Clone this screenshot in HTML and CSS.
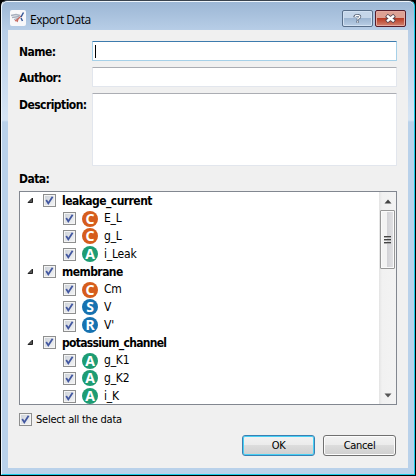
FILE: index.html
```html
<!DOCTYPE html>
<html lang="en">
<head>
<meta charset="utf-8">
<title>Export Data</title>
<link rel="stylesheet" href="styles.css">
</head>
<body>
<svg width="0" height="0" class="defs">
  <defs>
    <symbol id="tick" viewBox="0 0 13 13"><path d="M3.2 6 5.3 9.4 9.6 2.8" fill="none" stroke="#4257a0" stroke-width="1.8"/></symbol>
    <symbol id="expanded" viewBox="0 0 7 7"><path d="M5.5 1V5.5H1Z" fill="#555" stroke="#222"/></symbol>
  </defs>
</svg>
<div class="window">
  <header class="titlebar">
    <svg class="app" viewBox="0 0 16 16"><rect width="16" height="16" rx="2" fill="#f8f8fa"/><path d="M1 5.5 6 4.5 10 5.5M2 7.5 9 6.5M4 9.5 9 8" stroke="#a7afbd" stroke-width="1.3" fill="none"/><path d="M7 12 8 9 11 6M5 11 8 9" stroke="#c76a62" stroke-width="1.3" fill="none"/><path d="M11 7 13.5 2.5M11 8 12.5 11" stroke="#355797" stroke-width="1.5"/></svg>
    <h1>Export Data</h1>
    <button class="caption help" aria-label="Help"><svg viewBox="0 0 12 12"><path d="M2.2 4.2V3.2Q2.8 1.7 6 1.7T9.4 3.7Q9.4 5 7.4 5.8Q6.2 6.2 6.2 7.6M6.2 8.8V11.8" fill="none" stroke="#505c70" stroke-width="3.2"/><path d="M2.9 3.9V3.2Q3.4 1.8 6 1.8T9.2 3.7Q9.2 4.8 7.3 5.6Q6.2 6.1 6.2 7.2M6.2 9.5V11.2" fill="none" stroke="#fff" stroke-width="1.7"/></svg></button>
    <button class="caption close" aria-label="Close"><svg viewBox="0 0 12 12"><path d="M1.5 2.5 10.5 9.5M10.5 2.5 1.5 9.5" stroke="#54444e" stroke-width="4.6"/><path d="M2.2 3 9.8 9M9.8 3 2.2 9" stroke="#fff" stroke-width="2.6"/></svg></button>
  </header>
  <main>
    <div class="form">
      <label>Name:</label><div class="field focus"><i class="caret"></i></div>
      <label>Author:</label><div class="field"></div>
      <label class="top">Description:</label><div class="field area"></div>
    </div>
    <div class="datalabel">Data:</div>
    <div class="tree">
      <div class="rows">
        <div class="row group"><svg class="arrow"><use href="#expanded"/></svg><span class="check"><svg><use href="#tick"/></svg></span><b>leakage_current</b></div>
        <div class="row"><span class="check"><svg><use href="#tick"/></svg></span><span class="badge orange">C</span><span>E_L</span></div>
        <div class="row"><span class="check"><svg><use href="#tick"/></svg></span><span class="badge orange">C</span><span>g_L</span></div>
        <div class="row"><span class="check"><svg><use href="#tick"/></svg></span><span class="badge green">A</span><span>i_Leak</span></div>
        <div class="row group"><svg class="arrow"><use href="#expanded"/></svg><span class="check"><svg><use href="#tick"/></svg></span><b>membrane</b></div>
        <div class="row"><span class="check"><svg><use href="#tick"/></svg></span><span class="badge orange">C</span><span>Cm</span></div>
        <div class="row"><span class="check"><svg><use href="#tick"/></svg></span><span class="badge blue">S</span><span>V</span></div>
        <div class="row"><span class="check"><svg><use href="#tick"/></svg></span><span class="badge blue">R</span><span>V'</span></div>
        <div class="row group"><svg class="arrow"><use href="#expanded"/></svg><span class="check"><svg><use href="#tick"/></svg></span><b class="tight">potassium_channel</b></div>
        <div class="row"><span class="check"><svg><use href="#tick"/></svg></span><span class="badge green">A</span><span>g_K1</span></div>
        <div class="row"><span class="check"><svg><use href="#tick"/></svg></span><span class="badge green">A</span><span>g_K2</span></div>
        <div class="row"><span class="check"><svg><use href="#tick"/></svg></span><span class="badge green">A</span><span>i_K</span></div>
      </div>
      <div class="scrollbar">
        <svg class="up" viewBox="0 0 8 5"><path d="M0.5 4.5 4 0.5 7.5 4.5Z" fill="#444"/></svg>
        <div class="thumb"><i></i><i></i><i></i></div>
        <svg class="down" viewBox="0 0 8 5"><path d="M0.5 0.5H7.5L4 4.5Z" fill="#555"/></svg>
      </div>
    </div>
    <div class="all"><span class="check"><svg><use href="#tick"/></svg></span><span>Select all the data</span></div>
    <footer><button class="btn default">OK</button><button class="btn">Cancel</button></footer>
  </main>
</div>
</body>
</html>
```
FILE: styles.css
```css
* { box-sizing: border-box; }
body { margin: 0; background: #000; font: 12px/17px "DejaVu Sans Condensed", "DejaVu Sans", sans-serif; font-stretch: condensed; color: #000; overflow: hidden; }
.defs { display: block; height: 0; }
svg { display: block; flex: none; }
.window { width: 414px; height: 475px; margin-left: 1px; padding: 0 6px 6px; border: 1px solid #18c9e6; border-left-color: #edf5fc; border-top: 1px solid #39434e; border-radius: 6px 6px 0 0; box-shadow: inset 0 1px #eef5fb; background: linear-gradient(#9bb6d4 0, #b8cee7 30px, #d5e4f4 115px, #d5e4f4 119px, #b9d1ea 121px); }
.titlebar { height: 29px; display: flex; align-items: flex-start; padding: 9px 2px 0; }
.app { width: 16px; height: 16px; }
h1 { margin: 0 auto 0 4px; font: 12px/19px "Open Sans", sans-serif; letter-spacing: -0.5px; }
.caption { width: 31px; height: 17px; padding: 0; border: 1px solid #586e89; border-radius: 2px; display: flex; align-items: center; justify-content: center; background: linear-gradient(#c5d6e9 0 48%, #9db6d2 50%, #b9cee5); box-shadow: inset 0 0 0 1px #d2e1f2; margin-left: 2px; }
.caption svg { width: 11px; height: 11px; overflow: visible; }
.caption.help svg { width: 9px; height: 9px; }
.caption.close { border-color: #541c2a; background: linear-gradient(#dda194 0 45%, #b93b24 50%, #d18472); box-shadow: inset 0 0 0 1px #e5aaa0; }
main { width: 400px; height: 438px; padding: 11px; background: #f0f0f0; }
.form { display: grid; grid-template-columns: 73px 305px; grid-template-rows: 20px 20px 73px; row-gap: 6px; }
label, .datalabel, b { font-weight: bold; }
label, .datalabel { letter-spacing: -0.55px; }
label { padding-top: 3px; }
label.top { padding-top: 4px; }
.field { background: #fff; border: 1px solid #e2e6ed; border-top-color: #abadb3; border-radius: 1px; }
.focus { border-color: #a5d0e8; border-top-color: #3d7bad; }
.caret { display: block; width: 1px; height: 13px; margin: 3px 0 0 2px; background: #000; }
.datalabel { height: 25px; padding-top: 5px; }
.tree { width: 378px; height: 214px; border: 1px solid #828790; background: #fff; display: flex; overflow: hidden; }
.rows { flex: 1; letter-spacing: -0.2px; }
.row { height: 17.75px; display: flex; align-items: center; padding-left: 43px; }
.row.group { padding-left: 7px; }
.row > span:last-child { margin-left: 6px; }
.row b { margin-left: 6px; padding-top: 1px; letter-spacing: -0.55px; }
.row b.tight { letter-spacing: -0.7px; }
.arrow { width: 7px; height: 7px; margin-right: 9px; }
.check { width: 13px; height: 13px; border: 1px solid #8e8f8f; background: linear-gradient(135deg, #cbd0d7, #f5f6f7); box-shadow: inset 0 0 0 1px #f4f4f4; flex: none; }
.check svg { width: 13px; height: 13px; margin: -1px; }
.badge { width: 16px; height: 16px; margin-left: 6px; border-radius: 50%; color: #fff; font: bold 14px/15px "Noto Sans", sans-serif; letter-spacing: 0; text-align: center; flex: none; }
.orange { background: #d65d1c; }
.green { background: #1d9c73; }
.blue { background: #1772b0; }
.scrollbar { width: 17px; background: linear-gradient(90deg, #e3e3e3, #f1f1f1 3px, #f3f3f3); display: flex; flex-direction: column; align-items: center; }
.up, .down { width: 8px; height: 5px; }
.up { margin: 7px 0 6px; }
.down { margin: auto 0 6px; }
.thumb { width: 15px; height: 59px; border: 1px solid #979797; border-radius: 1px; box-shadow: inset 0 0 0 1px #fafafa; background: linear-gradient(90deg, #f3f3f3 0 45%, #d3d3d7 50%, #e3e3e5); display: flex; flex-direction: column; align-items: center; justify-content: center; gap: 1px; }
.thumb i { width: 7px; height: 2px; border-top: 1px solid #444; background: #aaa; }
.all { display: flex; align-items: center; height: 17px; margin-top: 6px; font-size: 11px; letter-spacing: -0.22px; }
.all > span:last-child { margin-left: 4px; }
footer { display: flex; justify-content: flex-end; gap: 8px; margin: 7px 1px 0 0; }
.btn { width: 73px; height: 21px; padding: 0; border: 1px solid #707070; border-radius: 3px; box-shadow: inset 0 0 0 1px #fcfcfc; background: linear-gradient(#f2f2f2, #ebebeb 48%, #dcdcdc 50%, #cfcfcf); font: inherit; font-size: 11px; line-height: 20px; letter-spacing: -0.3px; color: #000; }
.btn.default { border-color: #3c7fb1; box-shadow: inset 0 0 0 1px #47d0f5; }
```
